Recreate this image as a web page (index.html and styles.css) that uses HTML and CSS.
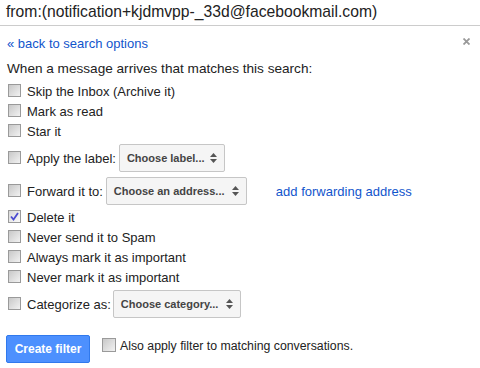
FILE: index.html
```html
<!DOCTYPE html>
<html lang="en">
<head>
  <meta charset="UTF-8">
  <title>Create filter</title>
  <link rel="stylesheet" href="styles.css">
</head>
<body>
  <div class="title">from:(notification+kjdmvpp-_33d@facebookmail.com)</div>
  <div class="content">
    <div class="top-row">
      <a class="link" href="#">« back to search options</a>
      <span class="close">
        <svg width="7" height="7" viewBox="0 0 7 7"><path d="M0.5 0.5L6.5 6.5M6.5 0.5L0.5 6.5" stroke="#999" stroke-width="1.8"/></svg>
      </span>
    </div>
    <div class="intro">When a message arrives that matches this search:</div>

    <div class="row"><span class="box"></span>Skip the Inbox (Archive it)</div>
    <div class="row"><span class="box"></span>Mark as read</div>
    <div class="row"><span class="box"></span>Star it</div>
    <div class="row select-row">
      <span class="box"></span>Apply the label:
      <div class="select label-select">Choose label...
        <svg class="arrows" width="7" height="10" viewBox="0 0 7 10"><path d="M3.5 0L7 4H0Z M3.5 10L7 6H0Z" fill="#555"/></svg>
      </div>
    </div>
    <div class="row select-row">
      <span class="box"></span>Forward it to:
      <div class="select address-select">Choose an address...
        <svg class="arrows" width="7" height="10" viewBox="0 0 7 10"><path d="M3.5 0L7 4H0Z M3.5 10L7 6H0Z" fill="#555"/></svg>
      </div>
      <a class="link forward-link" href="#">add forwarding address</a>
    </div>
    <div class="row"><span class="box checked">
      <svg width="9" height="9" viewBox="0 0 9 9"><path d="M1 4.5L3.5 7.5L8 1" stroke="#4b4bd0" stroke-width="1.8" fill="none"/></svg>
    </span>Delete it</div>
    <div class="row"><span class="box"></span>Never send it to Spam</div>
    <div class="row"><span class="box"></span>Always mark it as important</div>
    <div class="row"><span class="box"></span>Never mark it as important</div>
    <div class="row select-row">
      <span class="box"></span>Categorize as:
      <div class="select category-select">Choose category...
        <svg class="arrows" width="7" height="10" viewBox="0 0 7 10"><path d="M3.5 0L7 4H0Z M3.5 10L7 6H0Z" fill="#555"/></svg>
      </div>
    </div>

    <div class="actions">
      <button class="create-btn">Create filter</button>
      <div class="row also"><span class="box"></span>Also apply filter to matching conversations.</div>
    </div>
  </div>
</body>
</html>
```

FILE: styles.css
```css
body {
  margin: 0;
  font-family: Arial, "Liberation Sans", sans-serif;
  font-size: 13px;
  color: #222;
  background: #fff;
}
.title {
  font-size: 15.7px;
  line-height: 20px;
  height: 20px;
  padding: 2px 6px 3px;
  border-bottom: 1px solid #ccc;
  color: #222;
  white-space: nowrap;
}
.content {
  padding: 0 10px 0 7px;
}
.top-row {
  display: flex;
  justify-content: space-between;
  margin-top: 10px;
  line-height: 16px;
}
.link {
  color: #15c;
  text-decoration: none;
}
.close {
  display: flex;
  padding-top: 2px;
}
.intro {
  margin-top: 9px;
  line-height: 16px;
  font-size: 13.6px;
}
.row {
  display: flex;
  align-items: center;
  height: 20px;
}
.intro + .row {
  margin-top: 4px;
}
.box {
  width: 11px;
  height: 11px;
  margin: 0 6px 2px 1px;
  border: 1px solid #9a9a9a;
  background: linear-gradient(135deg, #c8c8c8, #f2f2f2);
  display: flex;
  align-items: center;
  justify-content: center;
  flex-shrink: 0;
}
.box.checked {
  background: linear-gradient(135deg, #d8d8d8, #fafafa);
}
.select-row {
  height: 28px;
  padding: 3px 0 2px;
}
.select {
  display: flex;
  align-items: center;
  justify-content: space-between;
  box-sizing: border-box;
  height: 28px;
  margin-left: 3px;
  padding: 0 7px 0 7px;
  border: 1px solid #c6c6c6;
  border-radius: 2px;
  background: #f5f5f5;
  color: #444;
  font-size: 11px;
  font-weight: bold;
}
.label-select {
  width: 106px;
}
.address-select {
  width: 141px;
}
.category-select {
  width: 128px;
  margin-left: 2px;
}
.forward-link {
  margin-left: 29px;
}
.actions {
  display: flex;
  align-items: flex-start;
  margin-top: 15px;
}
.create-btn {
  width: 84px;
  height: 28px;
  margin-left: -1px;
  padding: 0;
  background: #4d90fe;
  border: 1px solid #3079ed;
  border-radius: 2px;
  color: #fff;
  font-family: Arial, "Liberation Sans", sans-serif;
  font-size: 12px;
  font-weight: bold;
}
.also {
  margin-left: 11px;
  margin-top: 1px;
  font-size: 12.3px;
}
.also .box {
  width: 12px;
  height: 12px;
  margin-right: 4px;
}
```
